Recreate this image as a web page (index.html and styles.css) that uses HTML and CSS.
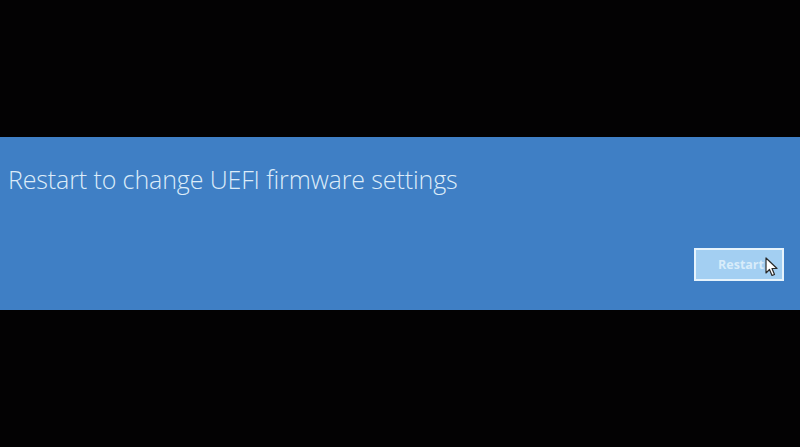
FILE: index.html
```html
<!DOCTYPE html>
<html>
<head>
<meta charset="utf-8">
<link rel="stylesheet" href="styles.css">
</head>
<body>
<div class="screen">
  <div class="band">
    <h1 class="title">Restart to change UEFI firmware settings</h1>
    <div class="actions">
      <button class="btn">Restart</button>
      <svg class="cursor" width="14" height="20" viewBox="0 0 14 20">
        <path d="M1 1 L1 16 L4.5 12.5 L7 18.5 L9.5 17.5 L7 11.5 L12 11.5 Z" fill="#ffffff" stroke="#2a2a2a" stroke-width="1.2" stroke-linejoin="round"/>
      </svg>
    </div>
  </div>
</div>
</body>
</html>
```
FILE: styles.css
```css
html, body {
  margin: 0;
  padding: 0;
  background: #030203;
  width: 800px;
  height: 447px;
  overflow: hidden;
}
.screen {
  width: 800px;
  height: 447px;
  display: flex;
  flex-direction: column;
  justify-content: flex-start;
  padding-top: 137px;
  box-sizing: border-box;
}
.band {
  height: 173px;
  background: #3f7fc5;
  display: flex;
  flex-direction: column;
  padding: 0 16px 0 8px;
  box-sizing: border-box;
}
.title {
  margin: 26px 0 0 0;
  font-family: "Open Sans", "Noto Sans", sans-serif;
  font-weight: 300;
  font-size: 25px;
  line-height: 32px;
  color: #dcecf9;
  letter-spacing: -0.12px;
}
.actions {
  display: flex;
  justify-content: flex-end;
  margin-top: 53px;
  position: relative;
}
.btn {
  width: 90px;
  height: 33px;
  box-sizing: border-box;
  border: 2px solid #e6f3fc;
  background: #a3cff2;
  color: #d8ecfa;
  font-family: "Open Sans", "Noto Sans", sans-serif;
  font-weight: 700;
  font-size: 12.5px;
  padding: 0 0 0 4px;
  margin: 0;
}
.cursor {
  position: absolute;
  left: 757px;
  top: 9px;
}
```
